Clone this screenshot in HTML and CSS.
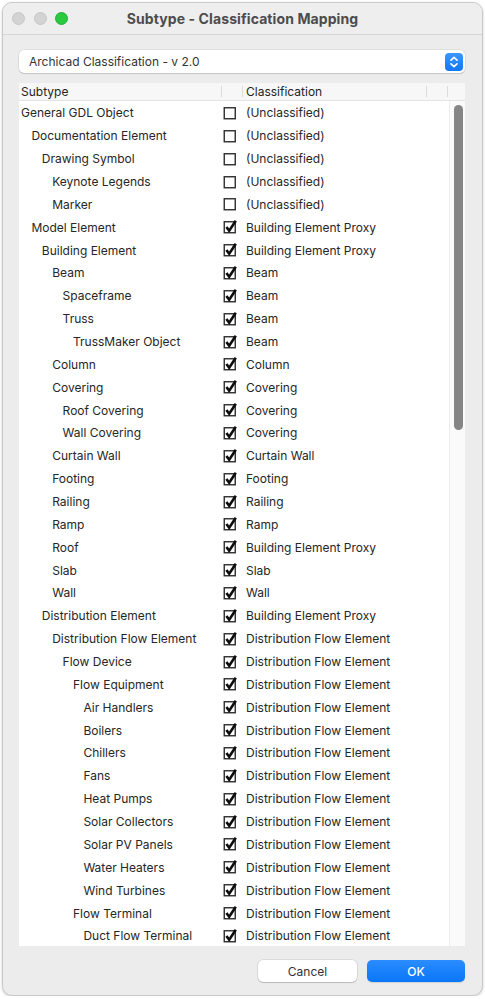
FILE: index.html
```html
<!DOCTYPE html>
<html>
<head>
<meta charset="utf-8">
<link rel="stylesheet" href="styles.css">
</head>
<body>
<div class="window">
  <div class="titlebar">
    <div class="lights">
      <span class="light gray"></span>
      <span class="light gray"></span>
      <span class="light green"></span>
    </div>
    <div class="title">Subtype - Classification Mapping</div>
  </div>
  <div class="content">
    <div class="select">
      <span class="select-text">Archicad Classification - v 2.0</span>
      <span class="select-btn">
        <svg width="18" height="18" viewBox="0 0 18 18"><path d="M6 7.2 L9 4.4 L12 7.2 M6 10.8 L9 13.6 L12 10.8" fill="none" stroke="#fff" stroke-width="1.6" stroke-linecap="round" stroke-linejoin="round"/></svg>
      </span>
    </div>
    <div class="table">
      <div class="thead">
        <div class="th c-sub">Subtype</div>
        <div class="th c-chk"></div>
        <div class="th c-cls">Classification</div>
        <div class="th c-end"></div>
        <div class="th c-scr"></div>
      </div>
      <div class="tbody">
        <div class="rows" id="rows"></div>
        <div class="scroll"><div class="thumb"></div></div>
      </div>
    </div>
    <div class="buttons">
      <button class="btn cancel">Cancel</button>
      <button class="btn ok">OK</button>
    </div>
  </div>
</div>
<script src="app.js"></script>
</body>
</html>
```
FILE: app.js
```js
var data = [
  [0,"General GDL Object",0,"(Unclassified)"],
  [1,"Documentation Element",0,"(Unclassified)"],
  [2,"Drawing Symbol",0,"(Unclassified)"],
  [3,"Keynote Legends",0,"(Unclassified)"],
  [3,"Marker",0,"(Unclassified)"],
  [1,"Model Element",1,"Building Element Proxy"],
  [2,"Building Element",1,"Building Element Proxy"],
  [3,"Beam",1,"Beam"],
  [4,"Spaceframe",1,"Beam"],
  [4,"Truss",1,"Beam"],
  [5,"TrussMaker Object",1,"Beam"],
  [3,"Column",1,"Column"],
  [3,"Covering",1,"Covering"],
  [4,"Roof Covering",1,"Covering"],
  [4,"Wall Covering",1,"Covering"],
  [3,"Curtain Wall",1,"Curtain Wall"],
  [3,"Footing",1,"Footing"],
  [3,"Railing",1,"Railing"],
  [3,"Ramp",1,"Ramp"],
  [3,"Roof",1,"Building Element Proxy"],
  [3,"Slab",1,"Slab"],
  [3,"Wall",1,"Wall"],
  [2,"Distribution Element",1,"Building Element Proxy"],
  [3,"Distribution Flow Element",1,"Distribution Flow Element"],
  [4,"Flow Device",1,"Distribution Flow Element"],
  [5,"Flow Equipment",1,"Distribution Flow Element"],
  [6,"Air Handlers",1,"Distribution Flow Element"],
  [6,"Boilers",1,"Distribution Flow Element"],
  [6,"Chillers",1,"Distribution Flow Element"],
  [6,"Fans",1,"Distribution Flow Element"],
  [6,"Heat Pumps",1,"Distribution Flow Element"],
  [6,"Solar Collectors",1,"Distribution Flow Element"],
  [6,"Solar PV Panels",1,"Distribution Flow Element"],
  [6,"Water Heaters",1,"Distribution Flow Element"],
  [6,"Wind Turbines",1,"Distribution Flow Element"],
  [5,"Flow Terminal",1,"Distribution Flow Element"],
  [6,"Duct Flow Terminal",1,"Distribution Flow Element"]
];
var box = '<svg width="14" height="14" viewBox="0 0 14 14"><rect x="1.25" y="1.75" width="11" height="11" fill="#fff" stroke="#2e2e2e" stroke-width="1.4"/></svg>';
var chk = '<svg width="14" height="14" viewBox="0 0 14 14"><rect x="1.25" y="1.75" width="11" height="11" fill="#fff" stroke="#2e2e2e" stroke-width="1.4"/><path d="M3.4 6.9 L6.2 10.7 L12.8 0.8" fill="none" stroke="#0d0d0d" stroke-width="2.6" stroke-linejoin="miter"/></svg>';
var html = "";
data.forEach(function (d) {
  html += '<div class="row"><div class="c-sub"><span style="padding-left:' + (d[0] * 10.4) + 'px">' + d[1] + '</span></div>' +
    '<div class="c-chk">' + (d[2] ? chk : box) + '</div>' +
    '<div class="c-cls">' + d[3] + '</div></div>';
});
document.getElementById("rows").innerHTML = html;
```
FILE: styles.css
```css
html, body {
  margin: 0;
  padding: 0;
  background: #fff;
}
body {
  padding: 2px 2px 0 2px;
  font-family: Inter, "Liberation Sans", sans-serif;
  font-size: 12px;
  color: #262626;
}
.window {
  width: 479px;
  height: 992px;
  border: 1px solid #c9c9c9;
  border-radius: 10px;
  background: #ececec;
  box-shadow: 0 1px 3px rgba(0,0,0,0.18);
  overflow: hidden;
  display: flex;
  flex-direction: column;
}
.titlebar {
  height: 31px;
  border-bottom: 1px solid #d6d6d6;
  background: #eeeeee;
  position: relative;
  display: flex;
  align-items: center;
  justify-content: center;
}
.lights {
  position: absolute;
  left: 9px;
  top: 9px;
  display: flex;
  gap: 8.5px;
}
.light {
  width: 13px;
  height: 13px;
  border-radius: 50%;
  box-sizing: border-box;
}
.light.gray {
  background: #d3d3d3;
  border: 0.5px solid #c6c6c6;
}
.light.green {
  background: #2bc840;
  border: 0.5px solid #22b03a;
}
.title {
  font-weight: 700;
  font-size: 14px;
  color: #4c4c4c;
  margin-top: 0px;
  letter-spacing: 0.1px;
}
.content {
  padding: 15px 17px 0 16px;
  display: flex;
  flex-direction: column;
}
.select {
  height: 23px;
  background: #fff;
  border-radius: 5px;
  box-shadow: 0 0 0 0.5px rgba(0,0,0,0.12), 0 1px 1px rgba(0,0,0,0.12);
  display: flex;
  align-items: center;
  justify-content: space-between;
  padding: 0 2px 0 10px;
}
.select-text {
  color: #333;
}
.select-btn {
  width: 18px;
  height: 18px;
  border-radius: 4px;
  background: linear-gradient(#3d97ff, #1176f6);
  display: flex;
}
.table {
  margin-top: 10px;
  width: 446px;
  display: flex;
  flex-direction: column;
}
.thead {
  height: 17px;
  background: #f7f7f7;
  border-bottom: 1px solid #e3e3e3;
  display: flex;
  align-items: center;
}
.th {
  height: 17px;
  display: flex;
  align-items: center;
  box-sizing: border-box;
  position: relative;
}
.th.c-sub, .th.c-chk, .th.c-cls, .th.c-end {
  background-image: linear-gradient(#dcdcdc, #dcdcdc);
  background-size: 1px 11px;
  background-repeat: no-repeat;
  background-position: right center;
}
.c-sub {
  width: 203px;
  padding-left: 2px;
  box-sizing: border-box;
  white-space: nowrap;
}
.c-chk {
  width: 21px;
  display: flex;
  align-items: center;
  padding-left: 1px;
  box-sizing: border-box;
}
.c-cls {
  width: 184px;
  padding-left: 3px;
  box-sizing: border-box;
  white-space: nowrap;
}
.c-end {
  width: 21px;
}
.c-scr {
  width: 17px;
}
.th.c-sub { padding-left: 2px; }
.tbody {
  height: 845px;
  background: #fff;
  display: flex;
  overflow: hidden;
}
.rows {
  width: 430px;
  padding-top: 0.5px;
}
.row {
  height: 22.86px;
  display: flex;
  align-items: center;
}
.scroll {
  width: 15px;
  border-left: 1px solid #ededed;
  background: #fafafa;
  position: relative;
}
.thumb {
  margin: 4px 0 0 4px;
  width: 9px;
  height: 325px;
  border-radius: 5px;
  background: #858585;
}
.buttons {
  margin-top: 14px;
  display: flex;
  justify-content: flex-end;
  gap: 10px;
  width: 446px;
}
.btn {
  width: 99px;
  height: 22px;
  border: none;
  border-radius: 5px;
  font-family: Inter, "Liberation Sans", sans-serif;
  font-size: 12px;
  padding: 0;
}
.cancel {
  background: #fff;
  color: #333;
  box-shadow: 0 0 0 0.5px rgba(0,0,0,0.15), 0 1px 1px rgba(0,0,0,0.15);
}
.ok {
  width: 98px;
  background: linear-gradient(#2a8cff, #0a76f7);
  color: #fff;
  font-weight: 500;
  box-shadow: 0 1px 1px rgba(0,0,0,0.12);
}
```
